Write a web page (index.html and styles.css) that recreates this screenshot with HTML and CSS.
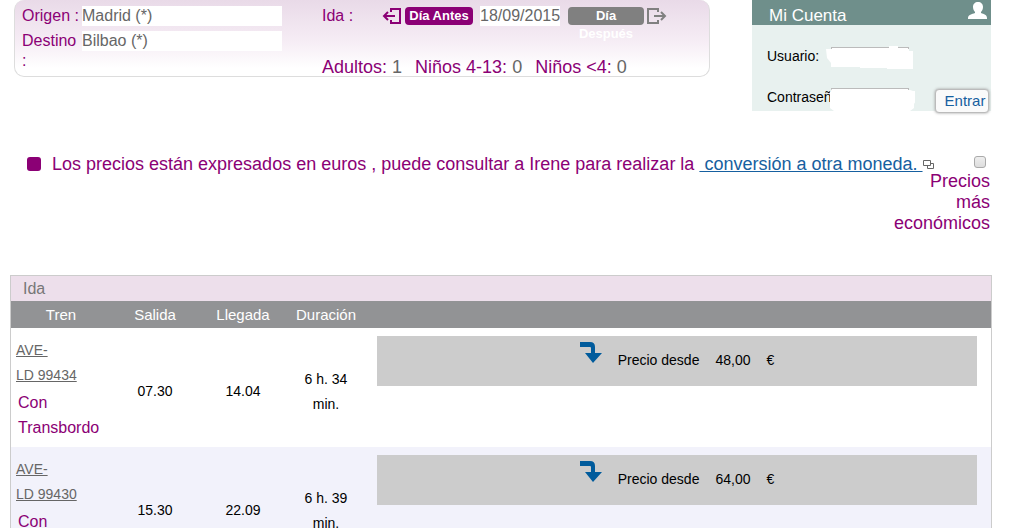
FILE: index.html
```html
<!DOCTYPE html>
<html lang="es">
  <head>
    <meta charset="UTF-8" />
    <meta name="viewport" content="width=device-width, initial-scale=1.0" />
    <title>Horarios y precios</title>
    <link rel="stylesheet" href="styles.css">
  </head>
  <body>
    <div class="top">
      <form class="search">
        <div class="route">
          <label for="origen">Origen :</label>
          <input type="text" id="origen" value="Madrid (*)" />
          <label for="destino">Destino :</label>
          <input type="text" id="destino" value="Bilbao (*)" />
        </div>
        <div class="trip">
          <div class="dates">
            <label for="fecha">Ida :</label>
            <svg width="20" height="16" viewBox="0 0 20 16" fill="none" stroke="#8b0075" stroke-width="2">
              <path d="M9 4V1h9v14H9v-3M13 8H2M6 4L2 8l4 4" />
            </svg>
            <a class="day-before" href="#">Día Antes</a>
            <input type="text" id="fecha" value="18/09/2015" />
            <a class="day-after" href="#">Día Después</a>
            <svg width="20" height="16" viewBox="0 0 20 16" fill="none" stroke="#808080" stroke-width="2">
              <path d="M11 4V1H1v14h10v-3M7 8h11M14 4l4 4-4 4" />
            </svg>
          </div>
          <div class="passengers">
            <span>Adultos: <b>1</b></span>
            <span>Niños 4-13: <b>0</b></span>
            <span>Niños &lt;4: <b>0</b></span>
          </div>
        </div>
      </form>
      <form class="account">
        <div class="account-header">
          <span>Mi Cuenta</span>
          <svg width="20" height="17" viewBox="0 0 20 17" fill="#fff">
            <path d="M10 0c3 0 5 2 5 5 0 2-1 4-2 5v1c3 1 6 2 6 5v1H0v-1c0-3 4-4 7-5v-1C6 9 5 7 5 5c0-3 2-5 5-5z" />
          </svg>
        </div>
        <div class="account-body">
          <div class="field">
            <label for="usuario">Usuario:</label>
            <input type="text" id="usuario" />
            <svg class="smudge" width="90" height="26" viewBox="0 0 90 26" fill="#fff">
              <path d="M1 4h5V4h58V1h9v3h11v2h4v18H62v-1H35v-1H6v-4L2 13z" />
            </svg>
          </div>
          <div class="field">
            <label for="clave">Contraseña:</label>
            <input type="password" id="clave" />
            <svg class="smudge" width="90" height="26" viewBox="0 0 90 26" fill="#fff">
              <path d="M7 3h10l2 1h66l3 1h3v10l-2 3v4l-4 3H9l-4-3V6z" />
            </svg>
            <button type="button">Entrar</button>
          </div>
        </div>
      </form>
    </div>

    <div class="notice">
      <span class="bullet"></span>
      <p>Los precios están expresados en euros , puede consultar a Irene para realizar la <a href="#">&nbsp;conversión a otra moneda.&nbsp;</a><svg width="12" height="10" viewBox="0 0 12 10" fill="#fff" stroke="#666">
        <path d="M4.500 3.500h6v5h-6z" />
        <path d="M.5.5h7v5h-7z" />
      </svg></p>
      <label class="cheapest"><input type="checkbox" /> Precios más económicos</label>
    </div>

    <div class="results">
      <h2>Ida</h2>
      <table>
        <thead>
          <tr>
            <th class="col-train">Tren</th>
            <th class="col-time">Salida</th>
            <th class="col-time">Llegada</th>
            <th class="col-length">Duración</th>
            <th></th>
          </tr>
        </thead>
        <tbody>
          <tr>
            <td class="train"><a href="#">AVE-<br />LD 99434</a><p>Con Transbordo</p></td>
            <td>07.30</td>
            <td>14.04</td>
            <td>6 h. 34<br />min.</td>
            <td class="price">
              <div class="fare">
                <svg width="22" height="22" viewBox="0 0 22 22" fill="#005b9c">
                  <path d="M0 0h10q5 0 5 5v6h7l-9 10-8-10h6V6q0-1-1-1H0z" />
                </svg>
                <span>Precio desde</span>
                <span>48,00</span>
                <span>€</span>
              </div>
            </td>
          </tr>
          <tr>
            <td class="train"><a href="#">AVE-<br />LD 99430</a><p>Con Transbordo</p></td>
            <td>15.30</td>
            <td>22.09</td>
            <td>6 h. 39<br />min.</td>
            <td class="price">
              <div class="fare">
                <svg width="22" height="22" viewBox="0 0 22 22" fill="#005b9c">
                  <path d="M0 0h10q5 0 5 5v6h7l-9 10-8-10h6V6q0-1-1-1H0z" />
                </svg>
                <span>Precio desde</span>
                <span>64,00</span>
                <span>€</span>
              </div>
            </td>
          </tr>
        </tbody>
      </table>
    </div>
  </body>
</html>
```
FILE: styles.css
```css
body {
  margin: 0 25px 0 10px;
  background-color: #fff;
  color: #000;
  font-family: "Liberation Sans", Arial, sans-serif;
  font-size: 14px;
}
input {
  box-sizing: border-box;
  font-family: inherit;
}
.top {
  display: flex;
  align-items: flex-start;
  justify-content: space-between;
  margin: 0 1px 0 4px;
}
.search {
  box-sizing: border-box;
  display: flex;
  flex: 1;
  gap: 40px;
  margin-right: 42px;
  padding: 6px 7px 0;
  border: 1px solid #ddd;
  border-top: none;
  border-radius: 10px;
  background: linear-gradient(#e9dae8, #f6edf5 55%, #fff 90%);
  color: #8b0075;
  font-size: 16px;
  line-height: 20px;
}
.search input {
  height: 20px;
  padding: 0;
  border: none;
  background-color: #fff;
  color: #666;
  font-size: 16px;
}
.route {
  display: grid;
  grid-template-columns: 60px 200px;
  row-gap: 5px;
  align-items: start;
  align-content: start;
}
.dates {
  display: flex;
  align-items: center;
  height: 20px;
  margin-bottom: 31px;
}
.dates label {
  width: 60px;
}
.dates input {
  width: 80px;
  margin: 0 8px 0 7px;
}
.day-before,
.day-after {
  height: 18px;
  border-radius: 4px;
  color: #fff;
  font-size: 13px;
  font-weight: bold;
  line-height: 18px;
  text-align: center;
  text-decoration: none;
}
.day-before {
  width: 68px;
  margin-left: 3px;
  background-color: #8b0075;
}
.day-after {
  width: 76px;
  margin-right: 3px;
  background-color: #808080;
}
.passengers {
  display: flex;
  gap: 13px;
  height: 19px;
  font-size: 18px;
}
.passengers b {
  color: #666;
  font-weight: normal;
}
.account {
  width: 239px;
  background-color: #e8f1ef;
}
.account-header {
  display: flex;
  justify-content: space-between;
  padding: 2px 3px 0 17px;
  height: 23px;
  background-color: #6f8f8b;
  color: #fff;
  font-size: 17px;
  line-height: 27px;
}
.account-body {
  padding: 21px 2px 2px 15px;
}
.field {
  position: relative;
  display: flex;
  align-items: center;
  height: 20px;
  margin-bottom: 21px;
}
.field:last-child {
  height: 24px;
  margin: -2px 0 0;
}
.field label {
  width: 64px;
}
.field input {
  position: relative;
  width: 78px;
  height: 18px;
  padding: 0;
  border: 1px solid #bbb;
  background-color: #fff;
}
/* white patch over the account boxes */
.smudge {
  position: absolute;
  left: 58px;
  top: calc(50% - 11px);
}
.field button {
  width: 54px;
  height: 24px;
  margin: 7px 0 0 auto;
  padding: 0 0 0 6px;
  border: 1px solid #bbb;
  border-radius: 4px;
  background-color: #fafafa;
  box-shadow: 0 0 3px #999;
  color: #1660a0;
  font-family: inherit;
  font-size: 15px;
}
.notice {
  display: grid;
  grid-template-columns: 25px 1fr;
  align-items: start;
  margin: 43px 2px 41px 17px;
  color: #8b0075;
  font-size: 18px;
  line-height: 21px;
}
.bullet {
  width: 14px;
  height: 14px;
  margin-top: 3px;
  border-radius: 3px;
  background-color: #8b0075;
}
.notice p,
.cheapest {
  grid-row: 1;
  grid-column: 2;
}
.notice p {
  margin: 0;
}
.notice a {
  color: #1660a0;
}
.cheapest {
  justify-self: end;
  width: 96px;
  text-align: right;
}
.cheapest input {
  display: block;
  width: 12px;
  height: 12px;
  margin: 2px 4px 3px auto;
  border: 1px solid #aaa;
  border-radius: 3px;
  background: linear-gradient(#eee, #ddd);
  appearance: none;
}
.results {
  border: 1px solid #ccc;
}
.results h2 {
  margin: 0;
  padding: 1px 0 0 12px;
  background-color: #eddfeb;
  color: #777;
  font-size: 16px;
  font-weight: normal;
  line-height: 24px;
}
.results table {
  width: 100%;
  border-spacing: 0;
  table-layout: fixed;
}
.results th {
  padding: 0;
  background-color: #929395;
  color: #fff;
  font-size: 15px;
  font-weight: normal;
  line-height: 27px;
}
.col-train {
  width: 100px;
}
.col-time {
  width: 88px;
}
.col-length {
  width: 78px;
}
.results td {
  padding: 8px 0 0;
  line-height: 25px;
  text-align: center;
}
.results tbody tr:nth-child(even) {
  background-color: #f2f2fb;
}
.results .train {
  padding: 10px 5px 7px;
  text-align: left;
}
.train a {
  color: #666;
}
.train p {
  margin: 2px 0 0 2px;
  color: #8b0075;
  font-size: 16px;
}
.results .price {
  padding: 8px 14px 0 12px;
  vertical-align: top;
}
.fare {
  display: flex;
  justify-content: center;
  gap: 16px;
  height: 50px;
  background-color: #ccc;
  line-height: 48px;
}
.fare svg {
  margin-top: 6px;
}
```
